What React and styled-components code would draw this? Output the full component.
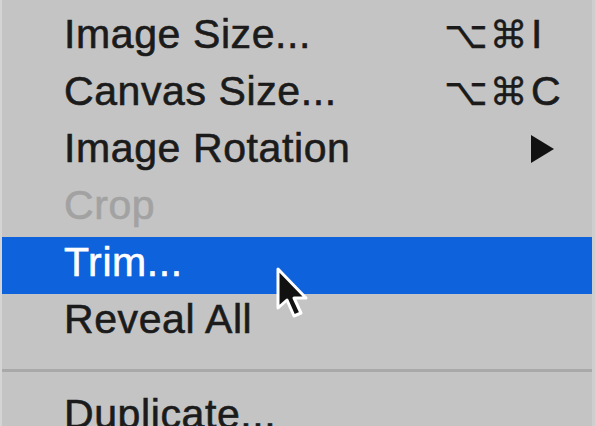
import React from "react";
import styled, { createGlobalStyle } from "styled-components";

const GlobalStyle = createGlobalStyle`
  html, body {
    margin: 0;
    padding: 0;
    background: #c4c4c4;
    overflow: hidden;
  }
`;

const Menu = styled.div`
  position: relative;
  width: 595px;
  height: 426px;
  box-sizing: border-box;
  padding-top: 9px;
  background: #c4c4c4;
  border-left: 2px solid #d4d4d4;
  border-right: 3px solid #cecece;
  font-family: "Liberation Sans", Arial, sans-serif;
  overflow: hidden;
`;

const Row = styled.div`
  display: grid;
  grid-template-columns: 1fr 148px;
  align-items: start;
  height: 57px;
  box-sizing: border-box;
  padding: 0 0 6px 62px;
  line-height: 51px;
  font-size: 41px;
  letter-spacing: 0.6px;
  -webkit-text-stroke: 0.6px currentColor;
  color: ${p => (p.disabled ? "#a2a2a2" : p.active ? "#ffffff" : "#1b1b1b")};
  background: ${p => (p.active ? "#0e62dc" : "transparent")};
`;

const Label = styled.span`
  white-space: nowrap;
`;

const Shortcut = styled.span`
  display: flex;
  align-items: baseline;
  white-space: nowrap;
`;

const Mods = styled.span`
  width: 87px;
  font-family: "DejaVu Sans", sans-serif;
  font-size: 38px;
  letter-spacing: 2px;
  -webkit-text-stroke: 0.3px currentColor;
`;

const Key = styled.span`
  font-size: 41px;
  letter-spacing: 0;
`;

const Arrow = styled.span`
  display: flex;
  align-items: center;
  height: 51px;
  padding-left: 86px;
`;

const Separator = styled.div`
  height: 38px;
  display: flex;
  align-items: center;
  &::before {
    content: "";
    flex: 1;
    height: 3px;
    background: #a9a9a9;
  }
`;

const Cursor = styled.svg`
  position: absolute;
  left: 272px;
  top: 266px;
`;

const items = [
  { label: "Image Size...", mods: "⌥⌘", key: "I" },
  { label: "Canvas Size...", mods: "⌥⌘", key: "C" },
  { label: "Image Rotation", submenu: true },
  { label: "Crop", disabled: true },
  { label: "Trim...", active: true },
  { label: "Reveal All" },
];

export default function App() {
  return (
    <>
      <GlobalStyle />
      <Menu>
        {items.map(item => (
          <Row key={item.label} disabled={item.disabled} active={item.active}>
            <Label>{item.label}</Label>
            {item.mods ? (
              <Shortcut>
                <Mods>{item.mods}</Mods>
                <Key>{item.key}</Key>
              </Shortcut>
            ) : item.submenu ? (
              <Arrow>
                <svg width="25" height="30" viewBox="0 0 25 30">
                  <path d="M1 1 L24 15 L1 29 Z" fill="#111" />
                </svg>
              </Arrow>
            ) : (
              <span />
            )}
          </Row>
        ))}
        <Separator />
        <Row>
          <Label>Duplicate...</Label>
          <span />
        </Row>
        <Cursor width="36" height="56" viewBox="0 0 36 56">
          <path
            d="M4 3 L4 42 L13 34 L20 50 L27 47 L20 32 L32 32 Z"
            fill="#111"
            stroke="#ffffff"
            strokeWidth="3"
            strokeLinejoin="round"
          />
        </Cursor>
      </Menu>
    </>
  );
}
